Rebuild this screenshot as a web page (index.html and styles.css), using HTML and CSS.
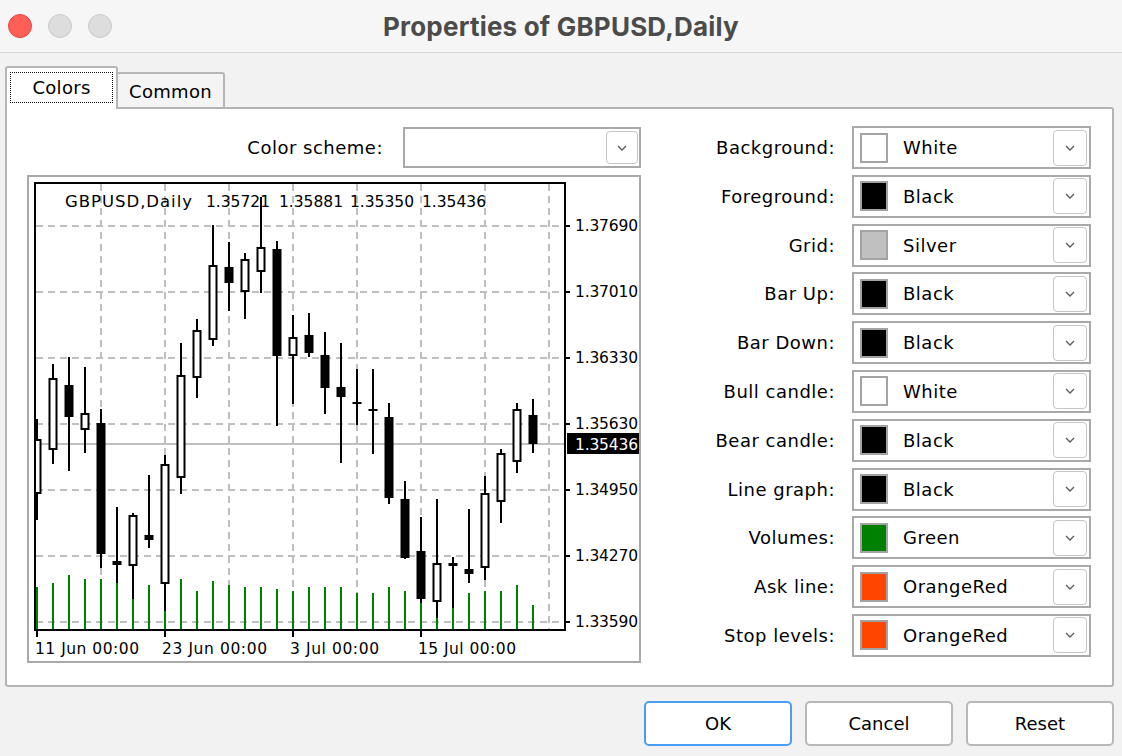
FILE: index.html
```html
<!DOCTYPE html>
<html lang="en">
<head>
  <meta charset="UTF-8" />
  <meta name="viewport" content="width=device-width, initial-scale=1.0"/>
  <title>Properties of GBPUSD,Daily</title>
  <link rel="stylesheet" href="styles.css">
</head>
<body>
  <div class="titlebar">
    <div class="lights">
      <span class="light close"></span>
      <span class="light"></span>
      <span class="light"></span>
    </div>
    <div class="title">Properties of GBPUSD,Daily</div>
    <div></div>
  </div>

  <div class="tabs">
    <div class="tab active"><span class="focus">Colors</span></div>
    <div class="tab">Common</div>
  </div>

  <div class="panel">
    <div class="left">
      <div class="scheme-row">
        <label>Color scheme:</label>
        <div class="combo scheme">
          <span class="drop"><svg width="10" height="6" viewBox="0 0 10 6"><polyline points="1,1 5,5 9,1"/></svg></span>
        </div>
      </div>

      <div class="chart">
        <svg width="610" height="484" viewBox="29 176 610 484">
          <defs>
            <clipPath id="plot"><rect x="36" y="183" width="528" height="445"/></clipPath>
          </defs>
          <rect x="29" y="176" width="610" height="484" fill="#fff"/>
          <g id="grid" class="grid"></g>
          <line class="price-line" x1="36" x2="564" y1="443" y2="443"/>
          <g clip-path="url(#plot)">
            <g id="volumes" class="vol"></g>
            <g id="candles"></g>
          </g>
          <rect class="frame" x="35" y="182" width="530" height="447"/>

          <text class="ct head" x="65" y="206" textLength="127" lengthAdjust="spacing">GBPUSD,Daily</text>
          <text class="ct" x="206" y="206" textLength="64" lengthAdjust="spacing">1.35721</text>
          <text class="ct" x="279" y="206" textLength="64" lengthAdjust="spacing">1.35881</text>
          <text class="ct" x="350" y="206" textLength="64" lengthAdjust="spacing">1.35350</text>
          <text class="ct" x="422" y="206" textLength="64" lengthAdjust="spacing">1.35436</text>

          <g id="ticks" class="tick"></g>
          <text class="ct" x="575" y="230" textLength="63" lengthAdjust="spacing">1.37690</text>
          <text class="ct" x="575" y="296" textLength="63" lengthAdjust="spacing">1.37010</text>
          <text class="ct" x="575" y="362" textLength="63" lengthAdjust="spacing">1.36330</text>
          <text class="ct" x="575" y="428" textLength="63" lengthAdjust="spacing">1.35630</text>
          <text class="ct" x="575" y="494" textLength="63" lengthAdjust="spacing">1.34950</text>
          <text class="ct" x="575" y="560" textLength="63" lengthAdjust="spacing">1.34270</text>
          <text class="ct" x="575" y="626" textLength="63" lengthAdjust="spacing">1.33590</text>

          <rect x="567" y="432" width="73" height="21" fill="#000"/>
          <text class="ct now" x="575" y="449" textLength="63" lengthAdjust="spacing">1.35436</text>

          <text class="ct" x="35" y="653" textLength="104" lengthAdjust="spacing">11 Jun 00:00</text>
          <text class="ct" x="162" y="653" textLength="105" lengthAdjust="spacing">23 Jun 00:00</text>
          <text class="ct" x="290" y="653" textLength="89" lengthAdjust="spacing">3 Jul 00:00</text>
          <text class="ct" x="418" y="653" textLength="98" lengthAdjust="spacing">15 Jul 00:00</text>
        </svg>
      </div>
    </div>

    <div class="colors">
      <label>Background:</label>
      <div class="combo"><span class="swatch white"></span><span class="name">White</span><span class="drop"><svg width="10" height="6" viewBox="0 0 10 6"><polyline points="1,1 5,5 9,1"/></svg></span></div>

      <label>Foreground:</label>
      <div class="combo"><span class="swatch black"></span><span class="name">Black</span><span class="drop"><svg width="10" height="6" viewBox="0 0 10 6"><polyline points="1,1 5,5 9,1"/></svg></span></div>

      <label>Grid:</label>
      <div class="combo"><span class="swatch silver"></span><span class="name">Silver</span><span class="drop"><svg width="10" height="6" viewBox="0 0 10 6"><polyline points="1,1 5,5 9,1"/></svg></span></div>

      <label>Bar Up:</label>
      <div class="combo"><span class="swatch black"></span><span class="name">Black</span><span class="drop"><svg width="10" height="6" viewBox="0 0 10 6"><polyline points="1,1 5,5 9,1"/></svg></span></div>

      <label>Bar Down:</label>
      <div class="combo"><span class="swatch black"></span><span class="name">Black</span><span class="drop"><svg width="10" height="6" viewBox="0 0 10 6"><polyline points="1,1 5,5 9,1"/></svg></span></div>

      <label>Bull candle:</label>
      <div class="combo"><span class="swatch white"></span><span class="name">White</span><span class="drop"><svg width="10" height="6" viewBox="0 0 10 6"><polyline points="1,1 5,5 9,1"/></svg></span></div>

      <label>Bear candle:</label>
      <div class="combo"><span class="swatch black"></span><span class="name">Black</span><span class="drop"><svg width="10" height="6" viewBox="0 0 10 6"><polyline points="1,1 5,5 9,1"/></svg></span></div>

      <label>Line graph:</label>
      <div class="combo"><span class="swatch black"></span><span class="name">Black</span><span class="drop"><svg width="10" height="6" viewBox="0 0 10 6"><polyline points="1,1 5,5 9,1"/></svg></span></div>

      <label>Volumes:</label>
      <div class="combo"><span class="swatch green"></span><span class="name">Green</span><span class="drop"><svg width="10" height="6" viewBox="0 0 10 6"><polyline points="1,1 5,5 9,1"/></svg></span></div>

      <label>Ask line:</label>
      <div class="combo"><span class="swatch orangered"></span><span class="name">OrangeRed</span><span class="drop"><svg width="10" height="6" viewBox="0 0 10 6"><polyline points="1,1 5,5 9,1"/></svg></span></div>

      <label>Stop levels:</label>
      <div class="combo"><span class="swatch orangered"></span><span class="name">OrangeRed</span><span class="drop"><svg width="10" height="6" viewBox="0 0 10 6"><polyline points="1,1 5,5 9,1"/></svg></span></div>
    </div>
  </div>

  <div class="buttons">
    <button class="default">OK</button>
    <button>Cancel</button>
    <button>Reset</button>
  </div>

  <script>
    const NS = "http://www.w3.org/2000/svg";

    function add(parent, tag, attrs) {
      const el = document.createElementNS(NS, tag);
      for (const k in attrs) el.setAttribute(k, attrs[k]);
      parent.appendChild(el);
      return el;
    }

    // [high, body top, body bottom, low, bullish]
    const candles = [
      [418, 438, 493, 519, 1], [363, 377, 449, 463, 1], [356, 384, 416, 470, 0],
      [366, 412, 429, 452, 1], [408, 422, 553, 567, 0], [506, 560, 564, 582, 0],
      [512, 514, 565, 598, 1], [474, 534, 539, 547, 0], [454, 463, 583, 610, 1],
      [342, 374, 477, 493, 1], [318, 329, 377, 397, 1], [224, 264, 339, 345, 1],
      [241, 266, 282, 310, 0], [252, 258, 291, 318, 1], [196, 246, 271, 292, 1],
      [240, 248, 355, 425, 0], [314, 336, 355, 403, 1], [312, 334, 352, 356, 0],
      [331, 354, 387, 413, 0], [342, 386, 396, 462, 0], [368, 401, 403, 424, 0],
      [368, 408, 410, 453, 0], [402, 416, 497, 503, 0], [480, 498, 557, 558, 0],
      [516, 550, 598, 602, 0], [498, 562, 601, 617, 1], [556, 562, 565, 607, 0],
      [508, 568, 573, 582, 0], [475, 492, 567, 579, 1], [448, 452, 501, 522, 1],
      [402, 408, 461, 472, 1], [398, 414, 443, 452, 0]
    ];
    const volumes = [586, 582, 574, 578, 578, 582, 588, 584, 590, 578, 590, 580, 584, 586, 586, 588,
                     590, 586, 586, 586, 592, 592, 586, 590, 592, 592, 592, 592, 590, 590, 584, 604];

    const grid = document.getElementById("grid");
    for (let i = 0; i < 7; i++) add(grid, "line", { x1: 36, x2: 564, y1: 225 + 66 * i, y2: 225 + 66 * i });
    for (let i = 0; i < 8; i++) add(grid, "line", { x1: 101 + 64 * i, x2: 101 + 64 * i, y1: 183, y2: 628 });

    const ticks = document.getElementById("ticks");
    for (let i = 0; i < 7; i++) add(ticks, "line", { x1: 565, x2: 570, y1: 225 + 66 * i, y2: 225 + 66 * i });
    [37, 165, 293, 421].forEach(x => add(ticks, "line", { x1: x, x2: x, y1: 629, y2: 636 }));

    const vol = document.getElementById("volumes");
    volumes.forEach((top, i) => {
      const x = 37 + 16 * i;
      add(vol, "line", { x1: x, x2: x, y1: top, y2: 628 });
    });

    const layer = document.getElementById("candles");
    candles.forEach((c, i) => {
      const x = 37 + 16 * i;
      add(layer, "line", { class: "wick", x1: x, x2: x, y1: c[0], y2: c[3] });
      if (c[4]) {
        add(layer, "rect", { class: "bull", x: x - 3.5, y: c[1] + 1, width: 7, height: c[2] - c[1] - 2 });
      } else {
        add(layer, "rect", { class: "bear", x: x - 4.5, y: c[1], width: 9, height: Math.max(c[2] - c[1], 2) });
      }
    });
  </script>
</body>
</html>
```

FILE: styles.css
```css
body {
  margin: 0;
  width: 1122px;
  height: 756px;
  overflow: hidden;
  background-color: #f2f2f2;
  font-family: "DejaVu Sans", sans-serif;
  font-size: 18px;
  color: #000;
}

.titlebar {
  display: grid;
  grid-template-columns: 1fr auto 1fr;
  align-items: center;
  height: 52px;
  background-color: #f6f6f6;
  border-bottom: 1px solid #d6d6d6;
}

.lights {
  display: flex;
  gap: 16px;
  padding-left: 8px;
}

.light {
  width: 22px;
  height: 22px;
  border-radius: 50%;
  background-color: #dddddd;
  border: 1px solid #c9c9c9;
}

.light.close {
  background-color: #ff5f57;
  border-color: #e2463f;
}

.title {
  font-family: "Inter", "Liberation Sans", sans-serif;
  font-weight: 700;
  font-size: 26px;
  color: #4b4b4b;
  letter-spacing: 0.2px;
}

.tabs {
  display: flex;
  align-items: flex-end;
  margin-top: 13px;
  padding-left: 5px;
  height: 41px;
}

.tab {
  box-sizing: border-box;
  height: 35px;
  width: 107px;
  border: 2px solid #b6b6b6;
  border-left: none;
  border-bottom: none;
  border-radius: 0 3px 0 0;
  background-color: #f4f4f4;
  display: flex;
  align-items: center;
  justify-content: center;
  padding-top: 2px;
  letter-spacing: 0.3px;
}

.tab.active {
  position: relative;
  z-index: 1;
  width: 113px;
  height: 43px;
  margin-bottom: -2px;
  border-left: 2px solid #b6b6b6;
  border-radius: 3px 3px 0 0;
  background-color: #fff;
  padding: 4px 3px 6px 3px;
}

.focus {
  flex: 1;
  align-self: stretch;
  display: flex;
  align-items: center;
  justify-content: center;
  border: 1px dotted #111;
}

.panel {
  box-sizing: border-box;
  display: flex;
  width: 1109px;
  height: 580px;
  margin-left: 5px;
  padding: 18px 21px 0 20px;
  background-color: #fff;
  border: 2px solid #b4b4b4;
  border-radius: 0 3px 3px 3px;
}

.left {
  width: 614px;
}

.scheme-row {
  display: flex;
  align-items: center;
  justify-content: flex-end;
  gap: 20px;
  height: 41px;
  margin-bottom: 7px;
}

label {
  letter-spacing: 0.5px;
}

.combo {
  box-sizing: border-box;
  display: flex;
  align-items: center;
  height: 43px;
  padding: 0 2px 0 6px;
  border: 2px solid #a9a9a9;
  background-color: #fff;
}

.combo.scheme {
  width: 238px;
  height: 41px;
  padding-right: 1px;
}

.swatch {
  box-sizing: border-box;
  width: 28px;
  height: 30px;
  border: 2px solid #a3a3a3;
}

.swatch.white { background-color: #fff; }
.swatch.black { background-color: #000; }
.swatch.silver { background-color: #c0c0c0; }
.swatch.green { background-color: #008000; }
.swatch.orangered { background-color: #ff4500; }

.name {
  margin-left: 15px;
  letter-spacing: 0.5px;
}

.drop {
  box-sizing: border-box;
  margin-left: auto;
  width: 34px;
  height: 36px;
  border: 1.5px solid #c6c6c6;
  border-radius: 4px;
  background-color: #fff;
  display: flex;
  align-items: center;
  justify-content: center;
}

.scheme .drop {
  width: 32px;
  height: 33px;
}

.drop polyline {
  fill: none;
  stroke: #5a5a5a;
  stroke-width: 1.3;
}

.chart {
  box-sizing: border-box;
  width: 614px;
  height: 488px;
  border: 2px solid #a9a9a9;
}

.chart svg {
  display: block;
}

.grid line {
  stroke: #c0c0c0;
  stroke-width: 2;
  stroke-dasharray: 7 5;
}

.price-line {
  stroke: #c0c0c0;
  stroke-width: 2;
}

.vol line {
  stroke: #008000;
  stroke-width: 2;
}

.wick {
  stroke: #000;
  stroke-width: 2;
}

.bull {
  fill: #fff;
  stroke: #000;
  stroke-width: 2;
}

.bear {
  fill: #000;
}

.frame {
  fill: none;
  stroke: #000;
  stroke-width: 2;
}

.tick line {
  stroke: #000;
  stroke-width: 2;
}

.ct {
  font-family: "DejaVu Sans", sans-serif;
  font-size: 15.5px;
  fill: #000;
}

.ct.head {
  font-size: 16.5px;
}

.ct.now {
  fill: #fff;
}

.colors {
  flex: 1;
  display: grid;
  grid-template-columns: 1fr 239px;
  grid-auto-rows: 43px;
  column-gap: 17px;
  row-gap: 5.8px;
  margin-top: -1px;
  align-items: center;
}

.colors label {
  text-align: right;
}

.buttons {
  display: flex;
  justify-content: flex-end;
  gap: 13px;
  margin-top: 14px;
  padding-right: 8px;
}

button {
  width: 148px;
  height: 45px;
  font-family: "DejaVu Sans", sans-serif;
  font-size: 18px;
  color: #000;
  background-color: #fff;
  border: 2px solid #b8b8b8;
  border-radius: 5px;
}

button.default {
  border-color: #4a9df5;
}
```
